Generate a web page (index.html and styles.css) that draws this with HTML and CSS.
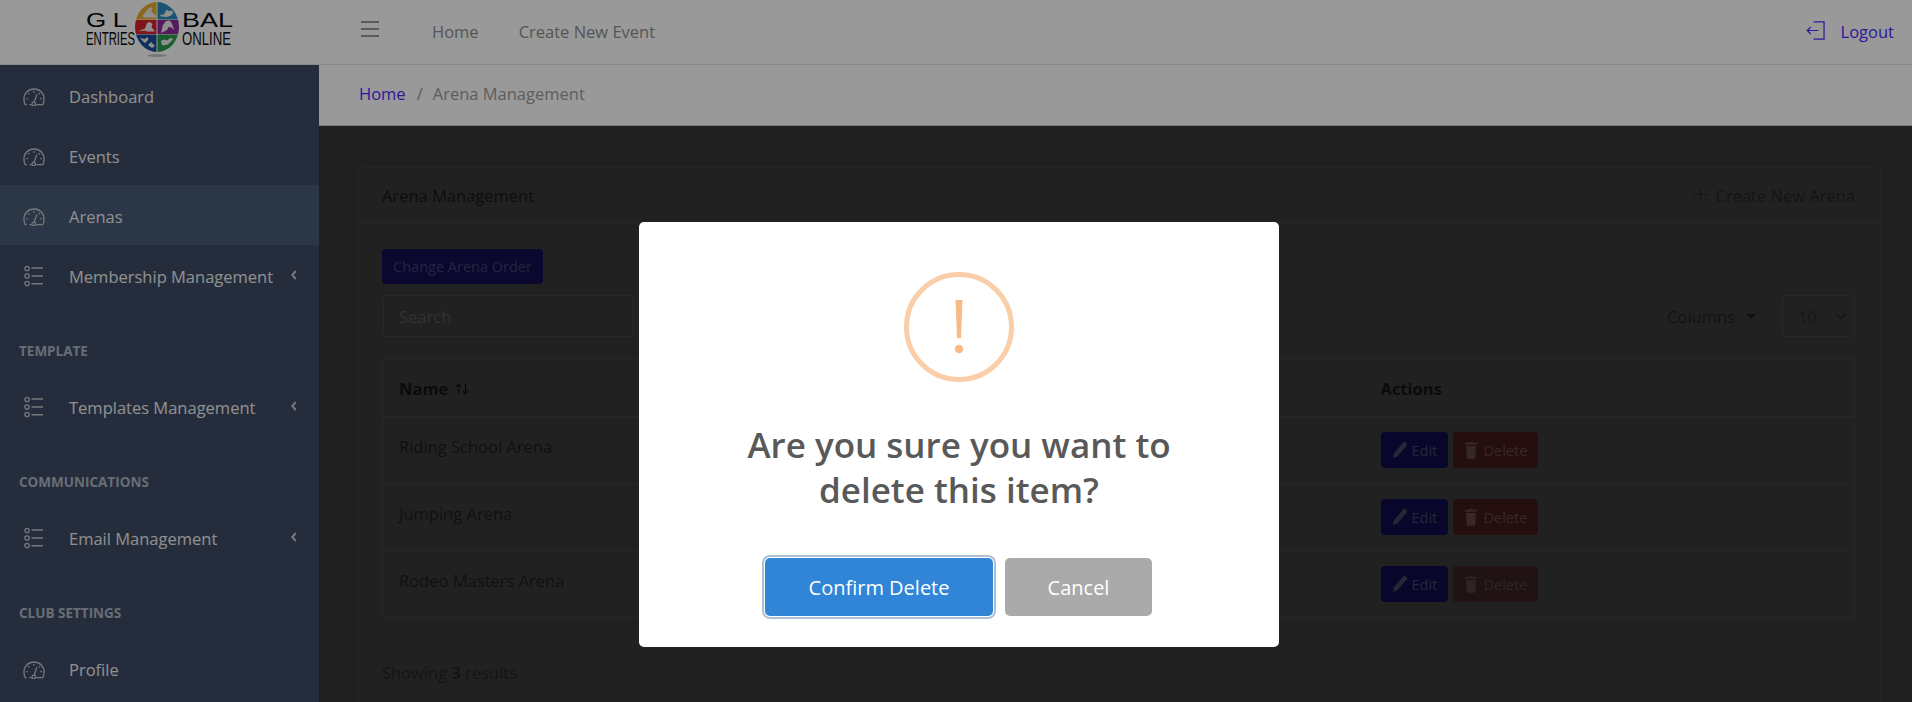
FILE: index.html
```html
<!DOCTYPE html>
<html lang="en">
<head>
<meta charset="utf-8">
<title>Arena Management</title>
<link rel="stylesheet" href="styles.css">
</head>
<body>
<svg class="defs" width="0" height="0" aria-hidden="true">
  <symbol id="gauge" viewBox="0 0 22 20">
    <path d="M3.6 18.6H2.2A10 10 0 0 1 1 13.2 10 9.6 0 0 1 11 3a10 9.6 0 0 1 10 10.200a10 10 0 0 1-1.200 5.400h-6.400" fill="none" stroke="currentColor" stroke-width="1.300"/>
    <path d="M6.500 18.600H8.600M3.200 12.700h1.600M17.200 12.700h1.600M5.200 7.200l1.100 1.100M16.800 7.200l-1.100 1.100M11 5v1.700M11.200 16.200l2.600-7.800" fill="none" stroke="currentColor" stroke-width="1.300"/>
    <circle cx="10.800" cy="18" r="1.800" fill="none" stroke="currentColor" stroke-width="1.300"/>
  </symbol>
  <symbol id="list" viewBox="0 0 20 22">
    <circle cx="3" cy="3.500" r="2.200" fill="none" stroke="currentColor" stroke-width="1.300"/>
    <circle cx="3" cy="11" r="2.200" fill="none" stroke="currentColor" stroke-width="1.300"/>
    <circle cx="3" cy="18.500" r="2.200" fill="none" stroke="currentColor" stroke-width="1.300"/>
    <path d="M7.500 3h11.500M7.500 11h11.500M7.500 18.800h11.500" fill="none" stroke="currentColor" stroke-width="1.500"/>
  </symbol>
  <symbol id="chev" viewBox="0 0 8 12">
    <path d="M5.800 2 2.300 6l3.500 4" fill="none" stroke="currentColor" stroke-width="2"/>
  </symbol>
  <symbol id="pencil" viewBox="0 0 16 18">
    <path d="M11.300 1.200c.6-.6 1.500-.6 2.100 0l1.300 1.400c.6.6.6 1.500 0 2.100L5.200 15.600 1 17l.8-4.600zM2.800 13.300l1.700 1.800" fill="currentColor"/>
  </symbol>
  <symbol id="trash" viewBox="0 0 14 18">
    <path d="M1 1.800h3.800l.5-1h3.400l.5 1H13v2H1zM2 5h10l-.8 11.500c-.1.8-.6 1.300-1.400 1.300H4.200c-.8 0-1.300-.5-1.400-1.300z" fill="currentColor"/>
  </symbol>
</svg>

<div class="app">
  <header class="topbar">
    <div class="brand">
      <div class="logo-words">
        <span class="logo-big logo-gl">GL</span>
        <span class="logo-small">ENTRIES</span>
      </div>
      <svg class="logo-globe" viewBox="0 0 44 56" aria-hidden="true">
        <defs>
          <clipPath id="globe-clip"><ellipse cx="22" cy="25" rx="22" ry="25"/></clipPath>
        </defs>
        <ellipse cx="22" cy="53.500" rx="10" ry="1.500" fill="#c4c4c4"/>
        <g clip-path="url(#globe-clip)">
          <rect x="0" y="0" width="21.500" height="17.500" fill="#e8ae2c"/>
          <rect x="22.500" y="0" width="21.500" height="17.500" fill="#2b8cc4"/>
          <rect x="0" y="18" width="21.500" height="14" fill="#d8232a"/>
          <rect x="22.500" y="18" width="21.500" height="14" fill="#8e2a9e"/>
          <rect x="0" y="32.500" width="21.500" height="18" fill="#164f96"/>
          <rect x="22.500" y="32.500" width="21.500" height="18" fill="#2a9c4c"/>
          <path d="M7 14.500 13 7l2.500-2 2 1.500-1.500 3 4 3 2 2-1 1H9zM25 13l4-.5 2.500-5 2 1.500 3-.5 2 2-2.500 3-4 1.500-6-.5zM3 29.500l7-3 2-5.500 3-1 2.500 2-1 3 3.500 4.500H12l-2-1zM26 31l2-8 3-4 3.500-.5 2 2 3 8-3-3-3-.5-1.500 3zM5 36l5 1 2-2 1.500 2-3 4-2-1zM13 43l3-3 4 4-3 2zM26 39l3-1.500 3 1 4-3 2 2-5 5-5 1-1.500-1.500z" fill="#efefef"/>
        </g>
      </svg>
      <div class="logo-words">
        <span class="logo-big logo-bal">BAL</span>
        <span class="logo-small logo-online">ONLINE</span>
      </div>
    </div>
    <nav class="topnav">
      <span class="burger" aria-label="Toggle menu"><i></i><i></i><i></i></span>
      <a class="topnav-link">Home</a>
      <a class="topnav-link">Create New Event</a>
    </nav>
    <a class="logout">
      <svg class="logout-icon" viewBox="0 0 20 20" aria-hidden="true">
        <path d="M8 1h11v18H8M1.500 10H13M5 6.300 1.300 10 5 13.700" fill="none" stroke="currentColor" stroke-width="1.300"/>
      </svg>
      <span>Logout</span>
    </a>
  </header>

  <div class="layout">
    <aside class="sidebar">
      <a class="side-item"><svg class="side-icon"><use href="#gauge"/></svg><span>Dashboard</span></a>
      <a class="side-item"><svg class="side-icon"><use href="#gauge"/></svg><span>Events</span></a>
      <a class="side-item is-active"><svg class="side-icon"><use href="#gauge"/></svg><span>Arenas</span></a>
      <a class="side-item"><svg class="side-icon side-icon-list"><use href="#list"/></svg><span>Membership Management</span><svg class="side-chev"><use href="#chev"/></svg></a>
      <div class="side-title">Template</div>
      <a class="side-item"><svg class="side-icon side-icon-list"><use href="#list"/></svg><span>Templates Management</span><svg class="side-chev"><use href="#chev"/></svg></a>
      <div class="side-title">Communications</div>
      <a class="side-item"><svg class="side-icon side-icon-list"><use href="#list"/></svg><span>Email Management</span><svg class="side-chev"><use href="#chev"/></svg></a>
      <div class="side-title">Club Settings</div>
      <a class="side-item"><svg class="side-icon"><use href="#gauge"/></svg><span>Profile</span></a>
    </aside>

    <main class="main">
      <div class="crumbs">
        <a class="crumb-link">Home</a>
        <span class="crumb-sep">/</span>
        <span>Arena Management</span>
      </div>
      <div class="content">
        <section class="card">
          <div class="card-head">
            <span>Arena Management</span>
            <a class="create-link">
              <svg class="plus" viewBox="0 0 16 16" aria-hidden="true"><path d="M8 0v16M0 8h16" stroke="currentColor" stroke-width="1"/></svg>
              <span>Create New Arena</span>
            </a>
          </div>
          <div class="card-body">
            <button class="btn-order" type="button">Change Arena Order</button>
            <div class="tools">
              <input class="search" type="text" placeholder="Search">
              <div class="tools-right">
                <span class="columns">Columns<i class="caret"></i></span>
                <div class="pagesize">
                  <span>10</span>
                  <svg class="pagesize-chev" viewBox="0 0 12 8" aria-hidden="true"><path d="M1 1.500 6 6.500 11 1.500" fill="none" stroke="currentColor" stroke-width="1.500"/></svg>
                </div>
              </div>
            </div>
            <table class="table">
              <thead>
                <tr>
                  <th class="col-name">Name <svg class="sort" viewBox="0 0 14 12" aria-hidden="true"><path d="M3.500 11V1.500M1 4 3.500 1.200 6 4M10.500 1v9.500M8 8l2.500 2.800L13 8" fill="none" stroke="currentColor" stroke-width="1.200"/></svg></th>
                  <th>Actions</th>
                </tr>
              </thead>
              <tbody>
                <tr>
                  <td class="cell-name">Riding School Arena</td>
                  <td><div class="actions"><a class="btn-sm btn-edit"><svg class="btn-ico"><use href="#pencil"/></svg>Edit</a><a class="btn-sm btn-del"><svg class="btn-ico btn-ico-trash"><use href="#trash"/></svg>Delete</a></div></td>
                </tr>
                <tr>
                  <td class="cell-name">Jumping Arena</td>
                  <td><div class="actions"><a class="btn-sm btn-edit"><svg class="btn-ico"><use href="#pencil"/></svg>Edit</a><a class="btn-sm btn-del"><svg class="btn-ico btn-ico-trash"><use href="#trash"/></svg>Delete</a></div></td>
                </tr>
                <tr>
                  <td class="cell-name">Rodeo Masters Arena</td>
                  <td><div class="actions"><a class="btn-sm btn-edit"><svg class="btn-ico"><use href="#pencil"/></svg>Edit</a><a class="btn-sm btn-del is-disabled"><svg class="btn-ico btn-ico-trash"><use href="#trash"/></svg>Delete</a></div></td>
                </tr>
              </tbody>
            </table>
            <p class="results">Showing <b>3</b> results</p>
          </div>
        </section>
      </div>
    </main>
  </div>
</div>

<div class="backdrop">
  <div class="dialog" role="dialog" aria-modal="true">
    <div class="warn-ring">
      <svg class="warn-mark" viewBox="0 0 10 54" aria-hidden="true">
        <path d="M1.500 0h7L7 38H3z" fill="#f8bb86"/>
        <circle cx="5" cy="49" r="4.200" fill="#f8bb86"/>
      </svg>
    </div>
    <h2 class="dialog-title">Are you sure you want to delete this item?</h2>
    <div class="dialog-actions">
      <button class="btn-confirm" type="button">Confirm Delete</button>
      <button class="btn-cancel" type="button">Cancel</button>
    </div>
  </div>
</div>
</body>
</html>
```

FILE: styles.css
```css
* { box-sizing: border-box; }
html, body { margin: 0; height: 100%; overflow: hidden; }
body {
  font-family: "Open Sans", "Noto Sans", "Liberation Sans", sans-serif;
  font-size: 16.500px;
  color: #161616;
  background: #343634;
}
.defs { position: absolute; }
a { text-decoration: none; color: inherit; }

.app { display: flex; flex-direction: column; height: 702px; overflow: hidden; }

/* top bar */
.topbar {
  flex: 0 0 65px;
  display: flex;
  align-items: center;
  background: #fff;
  border-bottom: 1px solid #e4e7ea;
}
.brand { width: 319px; flex: none; display: flex; padding: 2px 0 0 86px; height: 64px; color: #0a0a0a; }
.logo-words { width: 49px; display: flex; flex-direction: column; padding-top: 8px; }
.logo-big { font-family: "Liberation Sans", sans-serif; font-size: 20px; line-height: 20px; white-space: nowrap; transform: scaleX(1.300); transform-origin: left; }
.logo-gl { letter-spacing: 5px; }
.logo-bal { transform: scaleX(1.350); }
.logo-small { font-family: "Liberation Sans", sans-serif; font-size: 18px; line-height: 18px; white-space: nowrap; transform: scaleX(.630); transform-origin: left; }
.logo-online { transform: scaleX(.730); }
.logo-globe { width: 44px; height: 56px; margin: 0 3px 0 0; flex: none; }

.topnav { display: flex; align-items: center; margin-bottom: 2px; color: #8e8e8e; }
.burger { width: 18px; margin: 0 53px 5px 42px; display: flex; flex-direction: column; gap: 5px; }
.burger i { display: block; height: 2px; background: #9a9a9a; }
.topnav-link { margin-right: 40px; }
.logout { margin-left: auto; margin-right: 18px; margin-bottom: 1px; display: flex; align-items: center; gap: 16px; color: #4b2bff; }
.logout-icon { width: 19px; height: 19px; margin-bottom: 3px; }

/* sidebar */
.layout { flex: 1; display: flex; min-height: 0; }
.sidebar { width: 319px; flex: none; background: #3e4c64; color: #f0f0f0; }
.side-item { height: 60px; display: flex; align-items: center; padding: 3px 0 0 23px; position: relative; }
.side-item.is-active { background: #495a76; }
.side-icon { width: 22px; height: 20px; margin: -2px 24px 0 0; color: #c4c8ce; flex: none; }
.side-icon-list { width: 20px; height: 22px; margin-left: 1px; margin-right: 25px; }
.side-chev { width: 8px; height: 12px; margin-left: auto; margin-right: 21px; margin-top: -4px; color: #c4c8ce; }
.side-title { padding: 37px 19px 16px; height: 71px; font-size: 13.500px; line-height: 18px; font-weight: 700; text-transform: uppercase; color: #aeb6c4; }

/* main */
.main { flex: 1; min-width: 0; display: flex; flex-direction: column; }
.crumbs {
  flex: 0 0 61px;
  display: flex;
  align-items: center;
  padding: 0 0 3px 40px;
  background: #fff;
  border-bottom: 1px solid #c8ced3;
  color: #9a9a9a;
}
.crumb-link { color: #4b2bff; }
.crumb-sep { margin: 0 10px 0 11px; }
.content { flex: 1; padding: 41px 31px 0 38px; min-height: 0; overflow: hidden; background: #343634; }
.card { border: 1px solid #3e3e3e; border-radius: 4px; background: #383838; height: 600px; }
.card-head {
  height: 55px;
  display: flex;
  align-items: center;
  justify-content: space-between;
  padding: 0 25px 0 24px;
  border-bottom: 1px solid #404040;
}
.create-link { display: flex; align-items: center; gap: 8px; color: #222; }
.plus { width: 15px; height: 15px; margin-bottom: 2px; }
.card-body { padding: 26px 25px 0 24px; }
.btn-order {
  display: block;
  width: 161px;
  height: 35px;
  padding: 0;
  border: 0;
  border-radius: 4px;
  background: #130e50;
  color: #3e3e6a;
  font: inherit;
  font-size: 14.500px;
}
.tools { margin-top: 11px; display: flex; justify-content: space-between; align-items: center; }
.search {
  width: 250px;
  height: 42px;
  padding: 0 15px;
  margin-left: 1px;
  border: 1px solid #434343;
  border-radius: 4px;
  background: transparent;
  font: inherit;
}
.search::placeholder { color: #535353; opacity: 1; }
.tools-right { display: flex; align-items: center; gap: 26px; padding-top: 1px; }
.columns { display: flex; align-items: center; gap: 11px; color: #1f1f1f; }
.caret { width: 0; height: 0; border: 5px solid transparent; border-top-color: #1c1c1c; border-bottom: 0; }
.pagesize {
  width: 73px;
  height: 42px;
  margin-top: -1px;
  display: flex;
  align-items: center;
  justify-content: space-between;
  padding: 0 7px 0 15px;
  border: 1px solid #434343;
  border-radius: 4px;
  color: #262626;
}
.pagesize-chev { width: 12px; height: 8px; }
.table { width: 100%; margin-top: 21px; border-collapse: collapse; border: 1px solid #414141; }
.table th { height: 58px; padding: 3px 16px 0; text-align: left; font-weight: 700; color: #121216; border-bottom: 2px solid #424242; }
.col-name { width: 982px; }
.sort { width: 14px; height: 12px; margin-left: 2px; }
.table td { height: 67px; padding: 0 16px; border-top: 1px solid #414141; color: #1c1c1c; }
.cell-name { padding-bottom: 7px !important; }
.actions { display: flex; gap: 5px; }
.btn-sm { display: flex; align-items: center; height: 36px; padding: 0 10px 0 11px; border-radius: 4px; font-size: 14.500px; color: #5c5c5c; }
.btn-edit { width: 67px; background: #0f0b48; color: #40405c; }
.btn-del { width: 85px; background: #3f1818; color: #5e4242; }
.btn-del.is-disabled { background: #382020; color: #4e3c3c; }
.btn-ico { width: 16px; height: 18px; margin-right: 4px; flex: none; }
.btn-ico-trash { width: 14px; margin-right: 6px; }
.results { margin: 43px 0 0; color: #222; }

/* dialog */
.backdrop {
  position: fixed;
  inset: 0;
  z-index: 10;
  display: flex;
  justify-content: center;
  align-items: flex-start;
  padding: 222px 0 0 6px;
  background: rgba(0, 0, 0, .4);
}
.dialog { width: 640px; height: 425px; padding-top: 50px; background: #fff; border-radius: 5px; text-align: center; }
.warn-ring {
  width: 110px;
  height: 110px;
  margin: 0 auto;
  display: flex;
  align-items: center;
  justify-content: center;
  border: 5px solid #facea8;
  border-radius: 50%;
}
.warn-mark { width: 10px; height: 54px; }
.dialog-title { margin: 40px auto 0; width: 500px; font-size: 35px; line-height: 45px; font-weight: 600; color: #595959; }
.dialog-actions { margin-top: 46px; display: flex; justify-content: center; gap: 12px; padding-right: 1px; }
.dialog-actions button { height: 58px; border: 0; border-radius: 5px; color: #fff; font: inherit; font-size: 20px; }
.btn-confirm { width: 228px; background: #3085d6; box-shadow: 0 0 0 1px #fff, 0 0 0 3px rgba(50, 100, 150, .4); }
.btn-cancel { width: 147px; background: #aaa; }
```
